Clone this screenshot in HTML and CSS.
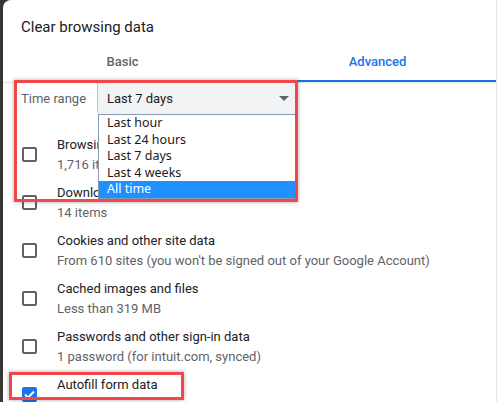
FILE: index.html
```html
<!DOCTYPE html>
<html>
<head>
<meta charset="utf-8">
<link rel="stylesheet" href="styles.css">
</head>
<body>
<div class="dialog">
  <h1 class="title">Clear browsing data</h1>
  <div class="tabs">
    <div class="tab">Basic</div>
    <div class="tab active">Advanced</div>
  </div>
  <div class="content">
    <div class="range-row">
      <span class="range-label">Time range</span>
      <div class="select">
        <span>Last 7 days</span>
        <svg class="arrow" width="10" height="5" viewBox="0 0 10 5"><path d="M0 0h10L5 5z" fill="#5f6368"/></svg>
      </div>
    </div>
    <div class="rows">
      <div class="row"><span class="cb"></span><div class="text"><div class="t">Browsing history</div><div class="s">1,716 items</div></div></div>
      <div class="row"><span class="cb"></span><div class="text"><div class="t">Download history</div><div class="s">14 items</div></div></div>
      <div class="row"><span class="cb"></span><div class="text"><div class="t">Cookies and other site data</div><div class="s">From 610 sites (you won't be signed out of your Google Account)</div></div></div>
      <div class="row"><span class="cb"></span><div class="text"><div class="t">Cached images and files</div><div class="s">Less than 319 MB</div></div></div>
      <div class="row"><span class="cb"></span><div class="text"><div class="t">Passwords and other sign-in data</div><div class="s">1 password (for intuit.com, synced)</div></div></div>
      <div class="row"><span class="cb checked"><svg width="11" height="9" viewBox="0 0 11 9"><path d="M1 4.5l3 3L10 1.5" fill="none" stroke="#fff" stroke-width="2"/></svg></span><div class="text"><div class="t">Autofill form data</div></div></div>
    </div>
  </div>
  <ul class="dropdown">
    <li>Last hour</li>
    <li>Last 24 hours</li>
    <li>Last 7 days</li>
    <li>Last 4 weeks</li>
    <li class="selected">All time</li>
  </ul>
  <div class="mark mark-range"></div>
  <div class="mark mark-autofill"></div>
</div>
</body>
</html>
```

FILE: styles.css
```css
html, body {
  margin: 0;
  padding: 0;
  height: 402px;
  overflow: hidden;
}
body {
  background: #3a3632;
  font-family: Roboto, "Liberation Sans", sans-serif;
}
.dialog {
  position: relative;
  margin-left: 3px;
  height: 402px;
  background: #fff;
  border-top-left-radius: 8px;
  border-right: 1px solid #e6e6e6;
  overflow: hidden;
}
.title {
  margin: 0;
  padding: 17px 21px 0 18px;
  font-size: 15px;
  line-height: 20px;
  font-weight: 400;
  color: #202124;
}
.tabs {
  display: flex;
  margin: 0 -9px 0 -8px;
  border-bottom: 1px solid #e3e3e3;
}
.tab {
  flex: 1;
  text-align: center;
  font-size: 13px;
  line-height: 16px;
  font-weight: 500;
  color: #5f6368;
  padding: 17px 0 10px;
  border-bottom: 2px solid transparent;
}
.tab.active {
  color: #1a73e8;
  border-bottom-color: #1a73e8;
}
.range-row {
  display: flex;
  align-items: center;
  padding-left: 18px;
  height: 31px;
}
.range-label {
  width: 76px;
  font-size: 13px;
  color: #5f6368;
}
.select {
  width: 200px;
  height: 31px;
  box-sizing: border-box;
  display: flex;
  align-items: center;
  justify-content: space-between;
  padding: 0 8px 0 9px;
  background: #f1f3f4;
  border-left: 1px solid #a8c4f0;
  border-radius: 0 0 0 4px;
  font-size: 13px;
  color: #202124;
}
.rows {
  padding: 16.5px 0 0 19px;
}
.row {
  display: flex;
  align-items: center;
  padding: 4px 0;
}
.cb {
  width: 15px;
  height: 15px;
  box-sizing: border-box;
  border: 2px solid #5f6368;
  border-radius: 2px;
  margin-right: 20px;
  flex: none;
  display: flex;
  align-items: center;
  justify-content: center;
}
.cb.checked {
  background: #1a73e8;
  border-color: #1a73e8;
}
.text {
  font-size: 13px;
  line-height: 20px;
  white-space: nowrap;
  min-height: 40px;
}
.t { color: #202124; }
.s { color: #5f6368; }
.dropdown {
  position: absolute;
  left: 95px;
  top: 114px;
  width: 198px;
  margin: 0;
  padding: 0;
  list-style: none;
  background: #fff;
  border: 1px solid #8a9ab4;
  font-family: "Noto Sans", "Open Sans", sans-serif;
  font-size: 12.5px;
  color: #1a1a1a;
}
.dropdown li {
  height: 16.5px;
  line-height: 16.5px;
  padding-left: 8px;
}
.dropdown li.selected {
  background: #1e90ff;
  color: #fff;
}
.mark {
  position: absolute;
  box-sizing: border-box;
  border: 3px solid #f2464b;
  box-shadow: 0 0 4px rgba(0, 0, 0, 0.35);
}
.mark-range {
  left: 11px;
  top: 80px;
  width: 284px;
  height: 122px;
}
.mark-autofill {
  left: 6px;
  top: 372px;
  width: 175px;
  height: 28px;
}
```
